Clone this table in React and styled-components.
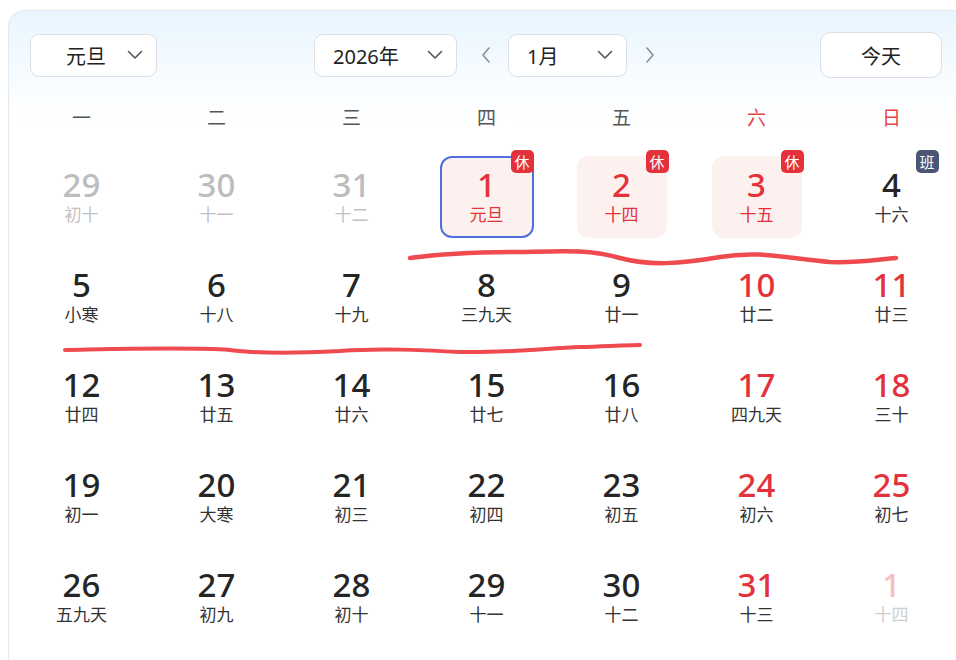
import React from "react";
import styled, { createGlobalStyle } from "styled-components";

const GlobalStyle = createGlobalStyle`
  body {
    margin: 0;
    background: #fff;
    overflow: hidden;
    font-family: "Noto Sans", "Noto Sans CJK SC", sans-serif;
  }
`;

const Page = styled.div`
  position: relative;
  width: 956px;
  height: 660px;
  padding: 10px 0 0 8px;
  box-sizing: border-box;
  overflow: hidden;
`;

const Card = styled.div`
  width: 980px;
  height: 700px;
  border: 1px solid #e2e9ef;
  border-radius: 16px;
  background: linear-gradient(180deg, #e8f5fe 0, #f6fbff 60px, #fff 110px);
  box-sizing: border-box;
`;

const Toolbar = styled.div`
  display: flex;
  align-items: center;
  height: 46px;
  margin-top: 21px;
  padding-left: 21px;
`;

const Select = styled.div`
  display: flex;
  align-items: center;
  justify-content: space-between;
  width: ${(p) => p.$w}px;
  height: 43px;
  box-sizing: border-box;
  margin-left: ${(p) => p.$ml || 0}px;
  padding: 0 13px 0 ${(p) => p.$pl}px;
  border: 1px solid #dcdfe5;
  border-radius: 9px;
  background: #fff;
  font-size: 20px;
  color: #222;
`;

const Arrow = styled.div`
  display: flex;
  align-items: center;
  justify-content: center;
  width: 22px;
  margin: 0 ${(p) => p.$mr || 0}px 0 ${(p) => p.$ml || 0}px;
`;

const TodayBtn = styled.div`
  display: flex;
  align-items: center;
  justify-content: center;
  width: 122px;
  height: 46px;
  box-sizing: border-box;
  margin-left: 159px;
  border: 1px solid #dcdfe5;
  border-radius: 11px;
  background: #fff;
  font-size: 20px;
  color: #222;
`;

const Grid = styled.div`
  display: grid;
  grid-template-columns: repeat(7, 135px);
  padding-left: 5px;
`;

const WeekRow = styled(Grid)`
  margin-top: 21px;
  height: 36px;
  align-items: center;
  margin-bottom: 12px;
`;

const WeekLabel = styled.div`
  text-align: center;
  font-size: 19px;
  color: ${(p) => (p.$weekend ? "#e8434a" : "#555")};
`;

const DayCell = styled.div`
  display: flex;
  align-items: center;
  justify-content: center;
  height: 100px;
`;

const DayBox = styled.div`
  position: relative;
  display: flex;
  flex-direction: column;
  align-items: center;
  justify-content: center;
  width: ${(p) => (p.$selected ? 94 : 90)}px;
  height: 82px;
  box-sizing: border-box;
  border-radius: 12px;
  border: 2.5px solid ${(p) => (p.$selected ? "#4f6fde" : "transparent")};
  background: ${(p) => (p.$rest ? "#fdf1f0" : "transparent")};
`;

const DayNum = styled.div`
  font-size: 33px;
  font-weight: 500;
  line-height: 36px;
  color: ${(p) => p.$color};
`;

const Lunar = styled.div`
  font-size: 17px;
  line-height: 24px;
  color: ${(p) => p.$color};
`;

const Badge = styled.div`
  position: absolute;
  top: -8px;
  right: ${(p) => p.$right}px;
  width: 23px;
  height: 23px;
  border-radius: 5px;
  display: flex;
  align-items: center;
  justify-content: center;
  font-size: 15px;
  color: #fff;
  background: ${(p) => (p.$work ? "#4b5675" : "#e3323b")};
`;

const Marks = styled.svg`
  position: absolute;
  left: 0;
  top: 0;
  pointer-events: none;
`;

const Chevron = () => (
  <svg width="16" height="10" viewBox="0 0 16 10">
    <path d="M1.5 1.5 L8 8 L14.5 1.5" fill="none" stroke="#555" strokeWidth="1.6" strokeLinecap="round" strokeLinejoin="round" />
  </svg>
);

const Side = ({ dir }) => (
  <svg width="12" height="18" viewBox="0 0 12 18">
    <path
      d={dir === "left" ? "M9 2 L3 9 L9 16" : "M3 2 L9 9 L3 16"}
      fill="none"
      stroke="#8a8f98"
      strokeWidth="1.6"
      strokeLinecap="round"
      strokeLinejoin="round"
    />
  </svg>
);

const weekdays = ["一", "二", "三", "四", "五", "六", "日"];

// kind: prev / next = 其他月份, red = 周末, holiday = 放假
const days = [
  { n: 29, l: "初十", kind: "prev" },
  { n: 30, l: "十一", kind: "prev" },
  { n: 31, l: "十二", kind: "prev" },
  { n: 1, l: "元旦", kind: "holiday", selected: true, badge: "休" },
  { n: 2, l: "十四", kind: "holiday", rest: true, badge: "休" },
  { n: 3, l: "十五", kind: "holiday", rest: true, badge: "休" },
  { n: 4, l: "十六", badge: "班" },
  { n: 5, l: "小寒" },
  { n: 6, l: "十八" },
  { n: 7, l: "十九" },
  { n: 8, l: "三九天" },
  { n: 9, l: "廿一" },
  { n: 10, l: "廿二", kind: "red" },
  { n: 11, l: "廿三", kind: "red" },
  { n: 12, l: "廿四" },
  { n: 13, l: "廿五" },
  { n: 14, l: "廿六" },
  { n: 15, l: "廿七" },
  { n: 16, l: "廿八" },
  { n: 17, l: "四九天", kind: "red" },
  { n: 18, l: "三十", kind: "red" },
  { n: 19, l: "初一" },
  { n: 20, l: "大寒" },
  { n: 21, l: "初三" },
  { n: 22, l: "初四" },
  { n: 23, l: "初五" },
  { n: 24, l: "初六", kind: "red" },
  { n: 25, l: "初七", kind: "red" },
  { n: 26, l: "五九天" },
  { n: 27, l: "初九" },
  { n: 28, l: "初十" },
  { n: 29, l: "十一" },
  { n: 30, l: "十二" },
  { n: 31, l: "十三", kind: "red" },
  { n: 1, l: "十四", kind: "next" },
];

function colors(kind) {
  if (kind === "prev") return ["#bdbdbd", "#c2c2c2"];
  if (kind === "next") return ["#f6bfc2", "#cfcfcf"];
  if (kind === "holiday") return ["#e3323b", "#e3323b"];
  if (kind === "red") return ["#e3323b", "#333"];
  return ["#252525", "#333"];
}

export default function App() {
  return (
    <Page>
      <GlobalStyle />
      <Card>
        <Toolbar>
          <Select $w={127} $pl={35}>
            <span>元旦</span>
            <Chevron />
          </Select>
          <Select $w={143} $pl={18} $ml={157}>
            <span>2026年</span>
            <Chevron />
          </Select>
          <Arrow $ml={18} $mr={11}>
            <Side dir="left" />
          </Arrow>
          <Select $w={119} $pl={18}>
            <span>1月</span>
            <Chevron />
          </Select>
          <Arrow $ml={12}>
            <Side dir="right" />
          </Arrow>
          <TodayBtn>今天</TodayBtn>
        </Toolbar>
        <WeekRow>
          {weekdays.map((w, i) => (
            <WeekLabel key={w} $weekend={i > 4}>
              {w}
            </WeekLabel>
          ))}
        </WeekRow>
        <Grid>
          {days.map((d, i) => {
            const [nc, lc] = colors(d.kind);
            return (
              <DayCell key={i}>
                <DayBox $selected={d.selected} $rest={d.rest || d.selected}>
                  <DayNum $color={nc}>{d.n}</DayNum>
                  <Lunar $color={lc}>{d.l}</Lunar>
                  {d.badge && (
                    <Badge $work={d.badge === "班"} $right={d.selected ? -2 : -4}>
                      {d.badge}
                    </Badge>
                  )}
                </DayBox>
              </DayCell>
            );
          })}
        </Grid>
      </Card>
      <Marks width="956" height="660" viewBox="0 0 956 660">
        <path
          d="M410 258 C440 254 470 252 520 252 C560 251 590 249 620 258 C650 266 680 264 720 257 C760 250 790 259 830 262 C860 263 880 259 896 258"
          fill="none"
          stroke="#ef4a50"
          strokeWidth="4.5"
          strokeLinecap="round"
        />
        <path
          d="M65 350 C120 349 190 347 230 350 C260 354 300 353 340 351 C380 348 420 350 460 352 C500 353 540 349 580 347 C610 346 630 345 640 345"
          fill="none"
          stroke="#ef4a50"
          strokeWidth="4"
          strokeLinecap="round"
        />
      </Marks>
    </Page>
  );
}
